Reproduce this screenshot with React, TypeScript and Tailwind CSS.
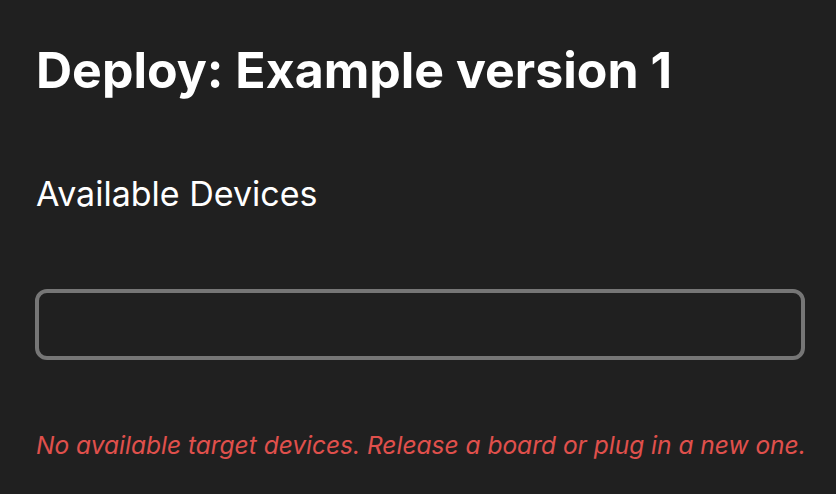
export default function App() {
  return (
    <div className="w-[836px] h-[494px] bg-[#202020] overflow-hidden pl-[35px] pr-[31px]" style={{ fontFamily: "Inter, 'Noto Sans', sans-serif" }}>
      <h1 className="pt-[40px] pl-[1px] text-[50px] leading-[60px] font-bold text-white">Deploy: Example version 1</h1>
      <h2 className="mt-[74px] pl-[1px] text-[34px] leading-[40px] text-white">Available Devices</h2>
      <div className="mt-[75px] h-[71px] w-[770px] rounded-[12px] border-[4px] border-[#767676]"></div>
      <p className="mt-[71px] pl-[1px] text-[24.5px] leading-[28px] italic whitespace-nowrap text-[#e0504c]">No available target devices. Release a board or plug in a new one.</p>
    </div>
  );
}
